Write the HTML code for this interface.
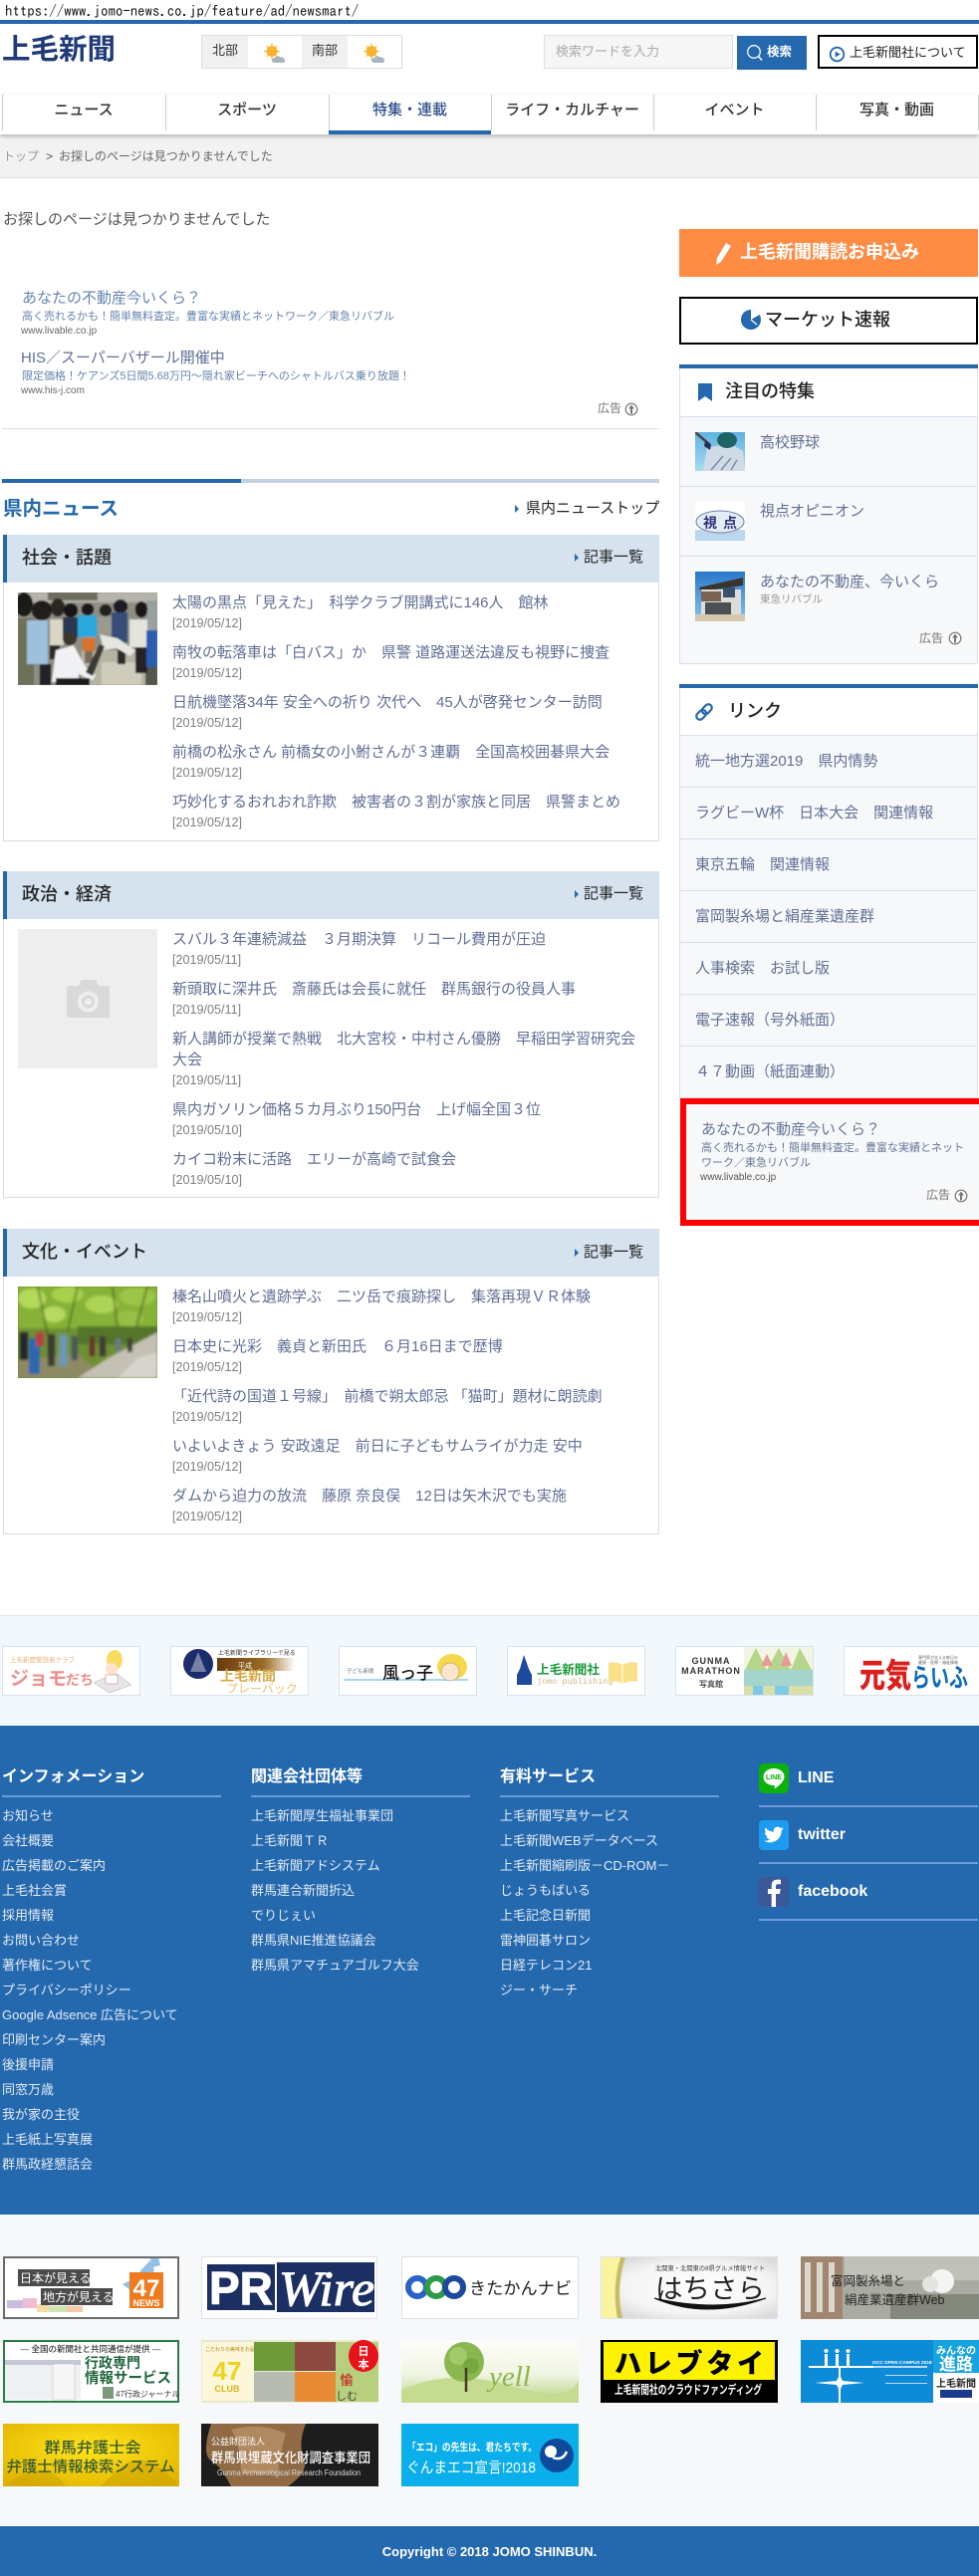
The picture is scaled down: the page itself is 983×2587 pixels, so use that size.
<!DOCTYPE html>
<html lang="ja">
<head>
<meta charset="utf-8">
<title>上毛新聞</title>
<style>
html,body{margin:0;padding:0;background:#fff;}
body{position:relative;width:983px;height:2587px;overflow:hidden;font-family:"Liberation Sans","Noto Sans CJK JP",sans-serif;color:#333;}
.a{position:absolute;}
.t{position:absolute;white-space:nowrap;line-height:20px;}
.h{position:absolute;left:173px;white-space:nowrap;line-height:20px;font-size:15px;color:#626f95;}
.d{position:absolute;left:173px;white-space:nowrap;line-height:20px;font-size:12.6px;color:#808080;}
.sec{position:absolute;left:3px;height:48px;background:#d6e2ee;border-left:4px solid #2468ae;box-sizing:border-box;width:659px;}
.st{position:absolute;left:22px;white-space:nowrap;line-height:24px;font-size:18px;font-weight:500;color:#222;}
.sm{position:absolute;left:586px;white-space:nowrap;line-height:20px;font-size:15px;color:#222;}
.ar{position:absolute;width:0;height:0;border-left:4px solid #2468ae;border-top:4px solid transparent;border-bottom:4px solid transparent;}
.box{position:absolute;left:3px;width:659px;box-sizing:border-box;border:1px solid #ddd;border-top:0;}
.nav{position:absolute;top:95px;height:36px;width:1px;background:#ccc;}
.ni{position:absolute;top:101px;line-height:20px;font-size:15px;font-weight:500;color:#333;text-align:center;white-space:nowrap;}
.lk{position:absolute;left:682px;width:300px;height:52px;box-sizing:border-box;background:#f7f8f9;border:1px solid #dde;border-top:0;line-height:52px;padding-left:15px;font-size:15px;color:#626f95;white-space:nowrap;}
.fh{position:absolute;top:1774px;font-size:16px;font-weight:700;color:#fff;line-height:22px;white-space:nowrap;}
.fl{position:absolute;top:1803px;height:2px;width:220px;background:#6d9bdc;}
.f{position:absolute;font-size:13px;line-height:20px;color:#e4ecf6;white-space:nowrap;}
.sl{position:absolute;left:762px;width:220px;height:2px;background:#6d9bdc;}
.sn{position:absolute;left:801px;font-size:16px;font-weight:700;color:#fff;line-height:20px;white-space:nowrap;}
.b{position:absolute;display:block;}
svg text{font-family:"Liberation Sans","Noto Sans CJK JP",sans-serif;}
</style>
</head>
<body>
<div class="t" style="left:5px;top:1px;font-family:'IPAGothic','Liberation Mono',monospace;font-size:14.800px;color:#111;">https://www.jomo-news.co.jp/feature/ad/newsmart/</div>
<div class="a" style="left:0;top:20px;width:983px;height:4px;background:#2468ae;"></div>

<!-- logo -->
<div class="t" style="left:2px;top:32px;font-size:28.5px;line-height:36px;font-weight:700;color:#1f3a78;">上毛新聞</div>

<!-- weather -->
<div class="a" style="left:202px;top:35px;width:202px;height:34px;box-sizing:border-box;border:1px solid #ddd;background:#fff;"></div>
<div class="a" style="left:203px;top:36px;width:46px;height:32px;background:#f0f0f0;"></div>
<div class="a" style="left:303px;top:36px;width:46px;height:32px;background:#f0f0f0;"></div>
<div class="t" style="left:213px;top:41px;font-size:13px;color:#333;">北部</div>
<div class="t" style="left:313px;top:41px;font-size:13px;color:#333;">南部</div>
<svg class="b" style="left:264px;top:42px;" width="24" height="22" viewBox="0 0 24 22"><g stroke="#f6c04a" stroke-width="1.2"><path d="M9 1v3M9 15v3M1 9.500h3M14 9.500h3M3.500 4l2 2M12.500 13l2 2M14.500 4l-2 2M3.500 15l2-2"/></g><circle cx="9" cy="9.500" r="5.500" fill="#f8b32e"/><path d="M12 21c-2 0-3-1-3-2.500S10.500 16 12 16c.8-1.800 4-2.200 5.500-.5 2-.5 4 .5 4.500 3 .5 1.500-.5 2.500-2 2.500z" fill="#a9b5bf"/></svg>
<svg class="b" style="left:364px;top:42px;" width="24" height="22" viewBox="0 0 24 22"><g stroke="#f6c04a" stroke-width="1.2"><path d="M9 1v3M9 15v3M1 9.500h3M14 9.500h3M3.500 4l2 2M12.500 13l2 2M14.500 4l-2 2M3.500 15l2-2"/></g><circle cx="9" cy="9.500" r="5.500" fill="#f8b32e"/><path d="M12 21c-2 0-3-1-3-2.500S10.500 16 12 16c.8-1.800 4-2.200 5.500-.5 2-.5 4 .5 4.500 3 .5 1.500-.5 2.500-2 2.500z" fill="#a9b5bf"/></svg>

<!-- search -->
<div class="a" style="left:546px;top:35px;width:190px;height:34px;box-sizing:border-box;border:1px solid #ddd;background:#f6f6f6;"></div>
<div class="t" style="left:558px;top:42px;font-size:13px;color:#aaa;">検索ワードを入力</div>
<div class="a" style="left:740px;top:36px;width:70px;height:34px;background:#2468ae;"></div>
<svg class="b" style="left:749px;top:44px;" width="18" height="18" viewBox="0 0 18 18"><circle cx="8" cy="8" r="6.300" fill="none" stroke="#fff" stroke-width="1.300"/><path d="M12.500 12.500l3.500 4" stroke="#fff" stroke-width="1.500"/></svg>
<div class="t" style="left:770px;top:42px;font-size:12.5px;font-weight:700;color:#fff;">検索</div>
<div class="a" style="left:821px;top:35px;width:161px;height:34px;box-sizing:border-box;border:2px solid #000;background:#fff;"></div>
<svg class="b" style="left:832px;top:46px;" width="17" height="17" viewBox="0 0 17 17"><circle cx="8.500" cy="8.500" r="6.800" fill="none" stroke="#2468ae" stroke-width="1.800"/><path d="M6.700 5.500l5 3-5 3z" fill="#2468ae"/></svg>
<div class="t" style="left:853px;top:43px;font-size:13px;color:#222;">上毛新聞社について</div>

<!-- nav -->
<div class="a" style="left:0;top:95px;width:983px;height:40px;background:#fff;box-shadow:0 2px 4px rgba(0,0,0,.25);z-index:1;"></div>
<div style="position:absolute;left:0;top:0;z-index:2;">
<div class="nav" style="left:2px;"></div><div class="nav" style="left:166px;"></div><div class="nav" style="left:330px;"></div><div class="nav" style="left:493px;"></div><div class="nav" style="left:656px;"></div><div class="nav" style="left:819px;"></div><div class="nav" style="left:982px;"></div>
<div class="ni" style="left:2px;width:164px;">ニュース</div>
<div class="ni" style="left:166px;width:164px;">スポーツ</div>
<div class="ni" style="left:330px;width:163px;color:#2f4f8c;">特集・連載</div>
<div class="ni" style="left:493px;width:163px;">ライフ・カルチャー</div>
<div class="ni" style="left:656px;width:163px;">イベント</div>
<div class="ni" style="left:819px;width:163px;">写真・動画</div>
<div class="a" style="left:330px;top:131px;width:163px;height:4px;background:#2468ae;"></div>
</div>

<!-- breadcrumb -->
<div class="a" style="left:0;top:135px;width:983px;height:44px;box-sizing:border-box;background:#f2f2f2;border-bottom:1px solid #ddd;"></div>
<div class="t" style="left:3px;top:147px;font-size:12px;color:#999;">トップ</div>
<div class="t" style="left:46px;top:147px;font-size:12px;color:#555;">&gt;</div>
<div class="t" style="left:59px;top:147px;font-size:12px;color:#666;">お探しのページは見つかりませんでした</div>

<div class="t" style="left:3px;top:211px;font-size:15px;color:#555;">お探しのページは見つかりませんでした</div>

<!-- left ad -->
<div class="t" style="left:22px;top:290px;font-size:15px;color:#6684af;">あなたの不動産今いくら？</div>
<div class="t" style="left:22px;top:308px;font-size:11px;color:#6684af;">高く売れるかも！簡単無料査定。豊富な実績とネットワーク／東急リバブル</div>
<div class="t" style="left:21px;top:323px;font-size:10px;color:#666;">www.livable.co.jp</div>
<div class="t" style="left:21px;top:350px;font-size:15px;color:#5f7099;">HIS／スーパーバザール開催中</div>
<div class="t" style="left:22px;top:368px;font-size:11px;color:#6684af;">限定価格！ケアンズ5日間5.68万円～隠れ家ビーチへのシャトルバス乗り放題！</div>
<div class="t" style="left:21px;top:383px;font-size:10px;color:#666;">www.his-j.com</div>
<div class="t" style="left:600px;top:400px;font-size:12px;color:#777;">広告</div>
<svg class="b" style="left:627px;top:404px;" width="14" height="14" viewBox="0 0 14 14"><circle cx="7" cy="7" r="5.800" fill="#fff" stroke="#777" stroke-width="1.200"/><path d="M7 2.500l3 4H8v5H6v-5H4z" fill="#777"/></svg>
<div class="a" style="left:2px;top:430px;width:660px;height:1px;background:#ddd;"></div>

<!-- 県内ニュース -->
<div class="a" style="left:2px;top:481px;width:660px;height:4px;background:#c4d2df;"></div>
<div class="a" style="left:2px;top:481px;width:240px;height:4px;background:#2468ae;"></div>
<div class="t" style="left:3px;top:498px;font-size:19.500px;line-height:26px;font-weight:700;color:#2468ae;">県内ニュース</div>
<div class="ar" style="left:517px;top:507px;"></div>
<div class="t" style="left:528px;top:501px;font-size:15px;color:#222;">県内ニューストップ</div>

<!-- section 1 -->
<div class="sec" style="top:537px;"></div>
<div class="st" style="top:548px;">社会・話題</div>
<div class="ar" style="left:577px;top:556px;"></div>
<div class="sm" style="top:550px;">記事一覧</div>
<div class="box" style="top:585px;height:260px;"></div>
<svg class="b" style="left:18px;top:595px;" width="140" height="93" viewBox="0 0 140 93"><defs><filter id="bl"><feGaussianBlur stdDeviation=".8"/></filter></defs><rect width="140" height="93" fill="#8f8e84"/><g filter="url(#bl)"><rect width="140" height="10" fill="#b5b4aa"/><rect x="30" y="0" width="50" height="8" fill="#6e6c60"/><rect x="64" y="58" width="76" height="35" fill="#b6b3a2"/><rect x="84" y="70" width="40" height="23" fill="#cfccbb"/><rect x="128" y="70" width="12" height="23" fill="#55544c"/>
<ellipse cx="6" cy="12" rx="9" ry="12" fill="#1d1a18"/><rect x="0" y="26" width="16" height="67" fill="#6e6f58"/>
<ellipse cx="24" cy="18" rx="10" ry="10" fill="#201c1a"/><rect x="9" y="28" width="21" height="44" fill="#9dc0dc"/><rect x="22" y="72" width="11" height="21" fill="#222226"/>
<ellipse cx="40" cy="15" rx="7" ry="9" fill="#2c2622"/><rect x="32" y="27" width="14" height="26" fill="#dbd5c6"/><rect x="32" y="53" width="10" height="14" fill="#2e2a28"/>
<ellipse cx="53" cy="18" rx="7" ry="7" fill="#181616"/><rect x="45" y="25" width="15" height="20" fill="#2b3952"/>
<ellipse cx="70" cy="17" rx="6" ry="6" fill="#1b1816"/><rect x="60" y="23" width="19" height="22" fill="#2ba9de"/><rect x="65" y="45" width="12" height="14" fill="#d9722a"/><rect x="67" y="59" width="8" height="12" fill="#7a6c5a"/>
<ellipse cx="88" cy="18" rx="6" ry="6" fill="#23211e"/><rect x="80" y="24" width="14" height="18" fill="#9a9a90"/>
<ellipse cx="103" cy="14" rx="7" ry="7" fill="#1b1b20"/><rect x="94" y="20" width="16" height="30" fill="#344e78"/><rect x="100" y="50" width="8" height="22" fill="#2c2a26"/>
<ellipse cx="124" cy="17" rx="6" ry="8" fill="#1a1816"/><rect x="112" y="27" width="22" height="28" fill="#e4e4de"/><rect x="118" y="55" width="12" height="26" fill="#262420"/>
<rect x="129" y="38" width="11" height="37" fill="#2a5cb0"/><rect x="130" y="8" width="10" height="30" fill="#9aa0a0"/>
<ellipse cx="52" cy="46" rx="7" ry="7" fill="#3a3632"/><path d="M34 90l4-32 18-5 12 22 10 8-3 5-14-6v8z" fill="#f0f1f4"/><rect x="38" y="86" width="34" height="7" fill="#1e1e1e"/>
<path d="M82 42l4 16 13-2 14 8 5-6-18-12z" fill="#e6e6e0"/><path d="M68 80l14-28 5 2-12 30z" fill="#3a3a34"/></g></svg>
<div class="h" style="top:596px;">太陽の黒点「見えた」　科学クラブ開講式に146人　館林</div>
<div class="d" style="top:616px;">[2019/05/12]</div>
<div class="h" style="top:646px;">南牧の転落車は「白バス」か　県警 道路運送法違反も視野に捜査</div>
<div class="d" style="top:666px;">[2019/05/12]</div>
<div class="h" style="top:696px;">日航機墜落34年 安全への祈り 次代へ　45人が啓発センター訪問</div>
<div class="d" style="top:716px;">[2019/05/12]</div>
<div class="h" style="top:746px;">前橋の松永さん 前橋女の小鮒さんが３連覇　全国高校囲碁県大会</div>
<div class="d" style="top:766px;">[2019/05/12]</div>
<div class="h" style="top:796px;">巧妙化するおれおれ詐欺　被害者の３割が家族と同居　県警まとめ</div>
<div class="d" style="top:816px;">[2019/05/12]</div>

<!-- section 2 -->
<div class="sec" style="top:875px;"></div>
<div class="st" style="top:886px;">政治・経済</div>
<div class="ar" style="left:577px;top:894px;"></div>
<div class="sm" style="top:888px;">記事一覧</div>
<div class="box" style="top:923px;height:280px;"></div>
<div class="a" style="left:18px;top:933px;width:140px;height:140px;background:#eeeeee;"></div>
<svg class="b" style="left:67px;top:984px;" width="43" height="38" viewBox="0 0 43 38"><path d="M3 6h9l2-5q.500-1 2-1h12q1.500 0 2 1l2 5h9q3 0 3 3v26q0 3-3 3H3q-3 0-3-3V9q0-3 3-3z" fill="#d9d9d9"/><circle cx="21.500" cy="22" r="10.500" fill="#eee"/><circle cx="21.500" cy="22" r="6.500" fill="#d9d9d9"/><circle cx="21.500" cy="22" r="3.500" fill="#eee"/></svg>
<div class="h" style="top:934px;">スバル３年連続減益　３月期決算　リコール費用が圧迫</div>
<div class="d" style="top:954px;">[2019/05/11]</div>
<div class="h" style="top:984px;">新頭取に深井氏　斎藤氏は会長に就任　群馬銀行の役員人事</div>
<div class="d" style="top:1004px;">[2019/05/11]</div>
<div class="h" style="top:1034px;">新人講師が授業で熱戦　北大宮校・中村さん優勝　早稲田学習研究会</div>
<div class="h" style="top:1055px;">大会</div>
<div class="d" style="top:1075px;">[2019/05/11]</div>
<div class="h" style="top:1105px;">県内ガソリン価格５カ月ぶり150円台　上げ幅全国３位</div>
<div class="d" style="top:1125px;">[2019/05/10]</div>
<div class="h" style="top:1155px;">カイコ粉末に活路　エリーが高崎で試食会</div>
<div class="d" style="top:1175px;">[2019/05/10]</div>

<!-- section 3 -->
<div class="sec" style="top:1234px;"></div>
<div class="st" style="top:1245px;">文化・イベント</div>
<div class="ar" style="left:577px;top:1254px;"></div>
<div class="sm" style="top:1248px;">記事一覧</div>
<div class="box" style="top:1282px;height:259px;"></div>
<svg class="b" style="left:18px;top:1292px;" width="140" height="92" viewBox="0 0 140 92"><defs><filter id="bl2"><feGaussianBlur stdDeviation="1.200"/></filter></defs><rect width="140" height="92" fill="#6f8f34"/><g filter="url(#bl2)"><rect width="140" height="42" fill="#87b238"/><ellipse cx="14" cy="12" rx="14" ry="10" fill="#b4d85a"/><ellipse cx="50" cy="8" rx="16" ry="8" fill="#a8d04c"/><ellipse cx="36" cy="28" rx="12" ry="8" fill="#b6da60"/><ellipse cx="84" cy="18" rx="16" ry="9" fill="#aed454"/><ellipse cx="120" cy="10" rx="18" ry="9" fill="#9cc646"/><ellipse cx="112" cy="32" rx="14" ry="8" fill="#96bf44"/><path d="M20 0l10 50M60 0L50 44M95 0l6 50M130 0l-12 44" stroke="#4a5a28" stroke-width="1.500" fill="none"/><rect x="60" y="40" width="80" height="18" fill="#55752c"/><path d="M0 74l60-6 30 24H0z" fill="#8d8a62"/><path d="M60 92l30-20 50-26v46z" fill="#c4c1b4"/><path d="M100 92l20-20 20-6v26z" fill="#d6d4cc"/><rect x="2" y="46" width="8" height="28" fill="#25282a"/><rect x="11" y="52" width="11" height="36" fill="#2e66b0"/><rect x="18" y="46" width="8" height="14" fill="#b8403c"/><rect x="30" y="48" width="7" height="32" fill="#3a3a34"/><rect x="41" y="48" width="9" height="32" fill="#6c98b0"/><rect x="54" y="50" width="6" height="24" fill="#47565a"/><rect x="72" y="50" width="5" height="20" fill="#63332e"/><rect x="82" y="50" width="6" height="20" fill="#3c3a30"/><rect x="98" y="52" width="5" height="14" fill="#6c7a88"/><rect x="110" y="52" width="5" height="14" fill="#3a4030"/></g></svg>
<div class="h" style="top:1293px;">榛名山噴火と遺跡学ぶ　二ツ岳で痕跡探し　集落再現ＶＲ体験</div>
<div class="d" style="top:1313px;">[2019/05/12]</div>
<div class="h" style="top:1343px;">日本史に光彩　義貞と新田氏　６月16日まで歴博</div>
<div class="d" style="top:1363px;">[2019/05/12]</div>
<div class="h" style="top:1393px;">「近代詩の国道１号線」　前橋で朔太郎忌 「猫町」題材に朗読劇</div>
<div class="d" style="top:1413px;">[2019/05/12]</div>
<div class="h" style="top:1443px;">いよいよきょう 安政遠足　前日に子どもサムライが力走 安中</div>
<div class="d" style="top:1463px;">[2019/05/12]</div>
<div class="h" style="top:1493px;">ダムから迫力の放流　藤原 奈良俣　12日は矢木沢でも実施</div>
<div class="d" style="top:1513px;">[2019/05/12]</div>

<!-- sidebar -->
<div class="a" style="left:682px;top:230px;width:300px;height:48px;background:#ff8c45;"></div>
<svg class="b" style="left:716px;top:243px;" width="20" height="24" viewBox="0 0 20 24"><path d="M13 1l5 3-10 16-5 3 1-7z" fill="#fff"/></svg>
<div class="t" style="left:743px;top:240px;font-size:18px;line-height:26px;font-weight:700;color:#fff;">上毛新聞購読お申込み</div>
<div class="a" style="left:682px;top:298px;width:300px;height:48px;box-sizing:border-box;border:2.500px solid #000;background:#fff;"></div>
<svg class="b" style="left:743px;top:311px;" width="22" height="20" viewBox="0 0 22 20"><circle cx="11" cy="10" r="10" fill="#2468ae"/><path d="M11 10V0a10 10 0 0 1 8.700 5z" fill="#fff"/><path d="M11 10l6 5" stroke="#fff" stroke-width="1.300"/></svg>
<div class="t" style="left:768px;top:308px;font-size:18px;line-height:26px;font-weight:500;color:#222;">マーケット速報</div>

<div class="a" style="left:682px;top:366px;width:300px;height:4px;background:#2468ae;"></div>
<div class="a" style="left:682px;top:370px;width:300px;height:48px;box-sizing:border-box;border-left:1px solid #dde;border-right:1px solid #dde;"></div>
<svg class="b" style="left:701px;top:385px;" width="14" height="18" viewBox="0 0 14 18"><path d="M0 0h14v18l-7-5-7 5z" fill="#2468ae"/></svg>
<div class="t" style="left:728px;top:381px;font-size:18px;line-height:24px;font-weight:500;color:#222;">注目の特集</div>
<div class="a" style="left:682px;top:418px;width:300px;height:249px;box-sizing:border-box;background:#f7f8f9;border:1px solid #dde;"></div>
<div class="a" style="left:683px;top:488px;width:298px;height:1px;background:#dde;"></div>
<div class="a" style="left:683px;top:558px;width:298px;height:1px;background:#dde;"></div>
<svg class="b" style="left:698px;top:434px;" width="50" height="39" viewBox="0 0 50 39"><defs><linearGradient id="sk" x1="0" y1="0" x2="0" y2="1"><stop offset="0" stop-color="#5fb2e0"/><stop offset="1" stop-color="#a9daf0"/></linearGradient></defs><rect width="50" height="39" fill="url(#sk)"/><path d="M12 16l22-5 14 8 2 20H8z" fill="#cfdce8"/><ellipse cx="32" cy="8" rx="10" ry="8" fill="#1f6464"/><path d="M0 0l14 12" stroke="#4a3f3a" stroke-width="2.500" fill="none"/><path d="M10 9l6 3-1 6-6-4z" fill="#2a3050"/><path d="M16 38l12-14M26 38l10-12M36 38l6-10" stroke="#7d8ea0" stroke-width="1.500"/></svg>
<svg class="b" style="left:698px;top:504px;" width="50" height="39" viewBox="0 0 50 39"><rect width="50" height="39" fill="#fff"/><rect y="28" width="50" height="11" fill="#bcd6ec"/><ellipse cx="25" cy="20" rx="24" ry="11" fill="#e4ecf6" stroke="#6e82a8" stroke-width="1"/><text x="8" y="26" font-size="14" font-weight="700" fill="#2e2f7a">視</text><text x="28" y="26" font-size="14" font-weight="700" fill="#2e2f7a">点</text></svg>
<svg class="b" style="left:698px;top:574px;" width="50" height="50" viewBox="0 0 50 50"><defs><linearGradient id="sk2" x1="0" y1="0" x2="0" y2="1"><stop offset="0" stop-color="#2878c8"/><stop offset="1" stop-color="#8cc4ec"/></linearGradient></defs><rect width="50" height="50" fill="url(#sk2)"/><path d="M4 16L48 6v8L6 20z" fill="#38342f"/><rect x="6" y="18" width="40" height="26" fill="#dcdcd8"/><rect x="6" y="20" width="20" height="10" fill="#7a6355"/><rect x="28" y="16" width="12" height="10" fill="#38506a"/><rect x="10" y="31" width="26" height="12" fill="#4a5056"/><rect y="43" width="50" height="7" fill="#d4c8ae"/></svg>
<div class="t" style="left:763px;top:435px;font-size:15px;color:#626f95;">高校野球</div>
<div class="t" style="left:763px;top:504px;font-size:15px;color:#626f95;">視点オピニオン</div>
<div class="t" style="left:763px;top:575px;font-size:15px;color:#626f95;">あなたの不動産、今いくら</div>
<div class="t" style="left:763px;top:592px;font-size:10.500px;color:#999;">東急リバブル</div>
<div class="t" style="left:923px;top:631px;font-size:12px;color:#777;">広告</div>
<svg class="b" style="left:952px;top:634px;" width="14" height="14" viewBox="0 0 14 14"><circle cx="7" cy="7" r="5.800" fill="#fff" stroke="#777" stroke-width="1.200"/><path d="M7 2.500l3 4H8v5H6v-5H4z" fill="#777"/></svg>

<div class="a" style="left:682px;top:687px;width:300px;height:4px;background:#2468ae;"></div>
<div class="a" style="left:682px;top:691px;width:300px;height:48px;box-sizing:border-box;border-left:1px solid #dde;border-right:1px solid #dde;border-bottom:1px solid #dde;"></div>
<svg class="b" style="left:697px;top:705px;" width="20" height="20" viewBox="0 0 20 20"><g fill="none" stroke="#2468ae" stroke-width="2.200" transform="rotate(-45 10 10)"><rect x="0.500" y="6.500" width="11" height="7" rx="3.500"/><rect x="8.500" y="6.500" width="11" height="7" rx="3.500"/></g></svg>
<div class="t" style="left:731px;top:702px;font-size:18px;line-height:24px;font-weight:500;color:#222;">リンク</div>
<div class="lk" style="top:739px;">統一地方選2019　県内情勢</div>
<div class="lk" style="top:791px;">ラグビーW杯　日本大会　関連情報</div>
<div class="lk" style="top:843px;">東京五輪　関連情報</div>
<div class="lk" style="top:895px;">富岡製糸場と絹産業遺産群</div>
<div class="lk" style="top:947px;">人事検索　お試し版</div>
<div class="lk" style="top:999px;">電子速報（号外紙面）</div>
<div class="lk" style="top:1051px;">４７動画（紙面連動）</div>

<div class="a" style="left:683px;top:1103px;width:306px;height:128px;box-sizing:border-box;border:6px solid #f00;background:#f7f8f9;"></div>
<div class="t" style="left:704px;top:1125px;font-size:15px;color:#66769a;">あなたの不動産今いくら？</div>
<div class="t" style="left:704px;top:1143px;font-size:11px;color:#66769a;">高く売れるかも！簡単無料査定。豊富な実績とネット</div>
<div class="t" style="left:704px;top:1158px;font-size:11px;color:#66769a;">ワーク／東急リバブル</div>
<div class="t" style="left:703px;top:1173px;font-size:10px;color:#555;">www.livable.co.jp</div>
<div class="t" style="left:930px;top:1190px;font-size:12px;color:#777;">広告</div>
<svg class="b" style="left:958px;top:1194px;" width="14" height="14" viewBox="0 0 14 14"><circle cx="7" cy="7" r="5.800" fill="#fff" stroke="#777" stroke-width="1.200"/><path d="M7 2.500l3 4H8v5H6v-5H4z" fill="#777"/></svg>

<!-- banner strip -->
<div class="a" style="left:0;top:1622px;width:983px;height:111px;box-sizing:border-box;background:#f2f8fc;border-top:1px solid #dbe5ee;"></div>

<svg class="b" style="left:2px;top:1653px;" width="139" height="50" viewBox="0 0 139 50"><rect x=".5" y=".5" width="138" height="49" fill="#fff" stroke="#d8e2ec"/><text x="8" y="16" font-size="6.500" fill="#e9b07a">上毛新聞愛読者クラブ</text><text x="8" y="39" font-size="19" font-weight="700" fill="#ef8e8e">ジョモ</text><text x="64" y="39" font-size="14" font-weight="700" fill="#ef8e8e">だち</text><path d="M92 37l22-10 16 12-22 8z" fill="#e4e6ea" stroke="#aaa" stroke-width=".5"/><ellipse cx="113" cy="14" rx="8" ry="10" fill="#f7dc60"/><circle cx="110" cy="23" r="6" fill="#fbe3cf"/><rect x="104" y="29" width="12" height="9" fill="#fff" stroke="#e08a8a" stroke-width=".6"/></svg>

<svg class="b" style="left:171px;top:1653px;" width="139" height="50" viewBox="0 0 139 50"><defs><linearGradient id="br" x1="0" x2="1"><stop offset="0" stop-color="#6a3c0c"/><stop offset=".6" stop-color="#9a6a26"/><stop offset="1" stop-color="#fff"/></linearGradient></defs><rect x=".5" y=".5" width="138" height="49" fill="#fff" stroke="#d8e2ec"/><circle cx="28" cy="18" r="15" fill="#1b2d6a"/><path d="M28 6l-8 20h16z" fill="#fff" opacity=".4"/><text x="48" y="9" font-size="6" fill="#333">上毛新聞ライブラリーで見る</text><rect x="47" y="12" width="78" height="13" fill="url(#br)"/><text x="68" y="22" font-size="7" fill="#fff">平成</text><text x="50" y="35" font-size="14" font-weight="700" fill="#d7a845">上毛新聞</text><text x="56" y="47" font-size="12" fill="#e8c56a">プレーバック</text></svg>

<svg class="b" style="left:340px;top:1653px;" width="139" height="50" viewBox="0 0 139 50"><rect x=".5" y=".5" width="138" height="49" fill="#fff" stroke="#d8e2ec"/><text x="8" y="27" font-size="5.500" fill="#6a7a8a">子ども新聞</text><rect x="5" y="33" width="125" height="2" fill="#a8d8f0"/><text x="44" y="33" font-size="17" font-weight="500" fill="#111">風っ子</text><ellipse cx="114" cy="21" rx="15" ry="13" fill="#f6d84a"/><circle cx="112" cy="26" r="9" fill="#fbe6cc" stroke="#888" stroke-width=".5"/></svg>

<svg class="b" style="left:509px;top:1653px;" width="139" height="50" viewBox="0 0 139 50"><rect x=".5" y=".5" width="138" height="49" fill="#fff" stroke="#d8e2ec"/><path d="M17 9l5 14 3 6v10H10V29l3-6z" fill="#1c4a9c"/><text x="30" y="28" font-size="12.600" font-weight="700" fill="#1a9a3a">上毛新聞社</text><text x="30" y="38" font-size="8.500" fill="#c8b98a" style="font-family:'Liberation Mono',monospace">jomo publishing</text><path d="M102 17q7-2 14 2 7-4 15-2v19q-8-2-15 2-7-4-14-2z" fill="#fbe08a"/><path d="M116 19v19" stroke="#fff" stroke-width="1"/></svg>

<svg class="b" style="left:678px;top:1653px;" width="139" height="50" viewBox="0 0 139 50"><rect x=".5" y=".5" width="138" height="49" fill="#fff" stroke="#d8e2ec"/><text x="36" y="18" font-size="9" font-weight="700" fill="#333" text-anchor="middle" letter-spacing="1">GUNMA</text><text x="36" y="28" font-size="9" font-weight="700" fill="#333" text-anchor="middle" letter-spacing="1">MARATHON</text><text x="36" y="41" font-size="8" font-weight="500" fill="#333" text-anchor="middle">写真館</text><rect x="69" y="1" width="69" height="48" fill="#f3f5e4"/><path d="M70 24l11-22 11 22zM92 24l12-22 12 22zM116 24l9-22 12 22z" fill="#b5d58a"/><path d="M86 20l6-12 6 12zM106 20l5-14 6 14z" fill="#e89a9a"/><rect x="69" y="24" width="69" height="16" fill="#a4d4cc"/><rect x="69" y="40" width="69" height="9" fill="#d8e0a8"/><rect x="78" y="40" width="10" height="9" fill="#7ec8e8"/><rect x="100" y="40" width="14" height="9" fill="#7ec8e8"/></svg>

<svg class="b" style="left:847px;top:1653px;" width="136" height="50" viewBox="0 0 136 50"><rect x=".5" y=".5" width="140" height="49" fill="#fff" stroke="#d8e2ec"/><text x="16" y="41" font-size="33" font-weight="900" fill="#d9201f" textLength="52" lengthAdjust="spacingAndGlyphs">元気</text><text x="68" y="41" font-size="26" font-weight="700" fill="#0e6bb8" textLength="57" lengthAdjust="spacingAndGlyphs">らいふ</text><text x="75" y="13" font-size="4" fill="#666">専門家が支える毎日の</text><text x="75" y="18" font-size="4" fill="#666">健康・医療・福祉情報</text></svg>

<!-- footer -->
<div class="a" style="left:0;top:1733px;width:983px;height:491px;background:#2468ae;"></div>
<div class="fh" style="left:2px;">インフォメーション</div>
<div class="fh" style="left:252px;">関連会社団体等</div>
<div class="fh" style="left:502px;">有料サービス</div>
<div class="fl" style="left:2px;"></div><div class="fl" style="left:252px;"></div><div class="fl" style="left:502px;"></div>

<div class="f" style="left:2px;top:1814px;">お知らせ</div>
<div class="f" style="left:2px;top:1839px;">会社概要</div>
<div class="f" style="left:2px;top:1864px;">広告掲載のご案内</div>
<div class="f" style="left:2px;top:1889px;">上毛社会賞</div>
<div class="f" style="left:2px;top:1914px;">採用情報</div>
<div class="f" style="left:2px;top:1939px;">お問い合わせ</div>
<div class="f" style="left:2px;top:1964px;">著作権について</div>
<div class="f" style="left:2px;top:1989px;">プライバシーポリシー</div>
<div class="f" style="left:2px;top:2014px;">Google Adsence 広告について</div>
<div class="f" style="left:2px;top:2039px;">印刷センター案内</div>
<div class="f" style="left:2px;top:2064px;">後援申請</div>
<div class="f" style="left:2px;top:2089px;">同窓万歳</div>
<div class="f" style="left:2px;top:2114px;">我が家の主役</div>
<div class="f" style="left:2px;top:2139px;">上毛紙上写真展</div>
<div class="f" style="left:2px;top:2164px;">群馬政経懇話会</div>

<div class="f" style="left:252px;top:1814px;">上毛新聞厚生福祉事業団</div>
<div class="f" style="left:252px;top:1839px;">上毛新聞ＴＲ</div>
<div class="f" style="left:252px;top:1864px;">上毛新聞アドシステム</div>
<div class="f" style="left:252px;top:1889px;">群馬連合新聞折込</div>
<div class="f" style="left:252px;top:1914px;">でりじぇい</div>
<div class="f" style="left:252px;top:1939px;">群馬県NIE推進協議会</div>
<div class="f" style="left:252px;top:1964px;">群馬県アマチュアゴルフ大会</div>

<div class="f" style="left:502px;top:1814px;">上毛新聞写真サービス</div>
<div class="f" style="left:502px;top:1839px;">上毛新聞WEBデータベース</div>
<div class="f" style="left:502px;top:1864px;">上毛新聞縮刷版－CD-ROM－</div>
<div class="f" style="left:502px;top:1889px;">じょうもばいる</div>
<div class="f" style="left:502px;top:1914px;">上毛記念日新聞</div>
<div class="f" style="left:502px;top:1939px;">雷神囲碁サロン</div>
<div class="f" style="left:502px;top:1964px;">日経テレコン21</div>
<div class="f" style="left:502px;top:1989px;">ジー・サーチ</div>

<svg class="b" style="left:762px;top:1771px;" width="30" height="30" viewBox="0 0 30 30"><rect width="30" height="30" rx="5" fill="#0ab20a"/><path d="M15 5c6 0 10.500 3.600 10.500 8.500 0 4.500-6 9.500-10 12 .5-2 .5-3.500-.5-3.500C9 22 4.500 18.400 4.500 13.500 4.500 8.600 9 5 15 5z" fill="#fff"/><text x="15" y="16" font-size="7" font-weight="700" fill="#0ab20a" text-anchor="middle">LINE</text></svg>
<div class="sn" style="top:1776px;">LINE</div>
<div class="sl" style="top:1813px;"></div>
<svg class="b" style="left:762px;top:1828px;" width="30" height="30" viewBox="0 0 30 30"><rect width="30" height="30" rx="4" fill="#1d9bf0"/><path d="M25 8.500c-.8.400-1.600.600-2.400.700.900-.5 1.500-1.300 1.800-2.200-.8.500-1.700.8-2.600 1a4 4 0 0 0-6.900 3.700C11.500 11.500 8.500 9.900 6.500 7.400c-1 1.800-.5 4.100 1.200 5.300-.6 0-1.200-.2-1.800-.5 0 2 1.400 3.700 3.300 4.100-.6.200-1.200.2-1.800.1.500 1.600 2 2.800 3.800 2.800A8 8 0 0 1 5 20.500 11.500 11.500 0 0 0 22.700 10.300c.9-.5 1.700-1.100 2.300-1.800z" fill="#fff"/></svg>
<div class="sn" style="top:1833px;">twitter</div>
<div class="sl" style="top:1870px;"></div>
<svg class="b" style="left:762px;top:1885px;" width="30" height="30" viewBox="0 0 30 30"><rect width="30" height="30" rx="4" fill="#3b5998"/><path d="M17 30V17h4l.6-5H17V9.500c0-1.500.5-2.300 2.400-2.300H22V2.800C21.500 2.700 20 2.600 18.500 2.600c-3.500 0-5.800 2.100-5.800 6V12H9v5h3.700v13z" fill="#fff"/></svg>
<div class="sn" style="top:1890px;">facebook</div>
<div class="sl" style="top:1927px;"></div>

<!-- lower banners -->
<div class="a" style="left:0;top:2224px;width:983px;height:313px;background:#f7f8f9;"></div>

<svg class="b" style="left:3px;top:2266px;" width="177" height="63" viewBox="0 0 177 63"><rect x="1" y="1" width="175" height="61" fill="#fff" stroke="#6b6b6b" stroke-width="2"/><g fill="#3f8bd0" opacity=".55"><path d="M120 28l12-6 10-12 6-6 4 10-10 14-14 6z"/><path d="M148 2l8-1 2 8-8 2z"/></g><g opacity=".55"><rect x="4" y="44" width="16" height="8" fill="#9d87c8"/><rect x="20" y="42" width="14" height="10" fill="#e38ab0"/><rect x="34" y="48" width="12" height="8" fill="#f0c060"/><rect x="46" y="50" width="18" height="6" fill="#a6d070"/><rect x="64" y="50" width="16" height="6" fill="#f2a060"/></g><rect x="15" y="13" width="72" height="17" fill="#4b4b4b"/><text x="17" y="26" font-size="12" fill="#fff">日本が見える</text><rect x="38" y="32" width="72" height="17" fill="#4b4b4b"/><text x="40" y="45" font-size="12" fill="#fff">地方が見える</text><rect x="127" y="16" width="34" height="36" fill="#ee7c1e"/><text x="144" y="40" font-size="24" font-weight="700" fill="#fff" text-anchor="middle">47</text><text x="144" y="50" font-size="9" font-weight="700" fill="#fff" text-anchor="middle">NEWS</text></svg>

<svg class="b" style="left:202px;top:2266px;" width="177" height="63" viewBox="0 0 177 63"><rect x=".5" y=".5" width="176" height="62" fill="#fff" stroke="#dde2ea"/><rect x="4" y="6" width="170" height="50" fill="#1c2f63"/><text x="8" y="48" font-size="46" font-weight="700" fill="#fff" stroke="#fff" stroke-width="1">PR</text><rect x="5" y="7" width="70" height="48" fill="none" stroke="#fff" stroke-width="2"/><text x="78" y="49" font-size="50" font-style="italic" fill="#fff" stroke="#fff" stroke-width="1" style="font-family:'Liberation Serif',serif" textLength="96" lengthAdjust="spacingAndGlyphs">Wire</text></svg>

<svg class="b" style="left:403px;top:2266px;" width="178" height="63" viewBox="0 0 178 63"><rect x=".5" y=".5" width="177" height="62" fill="#fff" stroke="#dde2ea"/><circle cx="16" cy="31" r="9" fill="none" stroke="#2a63c8" stroke-width="6"/><circle cx="35" cy="31" r="9" fill="none" stroke="#2f9a4a" stroke-width="6"/><circle cx="53" cy="31" r="9" fill="none" stroke="#1b4a9c" stroke-width="6"/><text x="68" y="38" font-size="17" fill="#222" textLength="103" lengthAdjust="spacingAndGlyphs">きたかんナビ</text></svg>

<svg class="b" style="left:603px;top:2266px;" width="178" height="63" viewBox="0 0 178 63"><defs><radialGradient id="pl" cx=".55" cy=".5" r=".6"><stop offset="0" stop-color="#fff"/><stop offset=".7" stop-color="#f4f4f4"/><stop offset="1" stop-color="#dcdcdc"/></radialGradient></defs><rect x=".5" y=".5" width="177" height="62" fill="url(#pl)" stroke="#dde2ea"/><path d="M1 1h22q-10 30-4 61H1z" fill="#faf3a0"/><path d="M20 1h5q-10 30-3 61h-5q-6-30 3-61z" fill="#c5bd68"/><text x="55" y="14" font-size="6.500" fill="#444" textLength="110" lengthAdjust="spacingAndGlyphs">北関東・北関東の8県グルメ情報サイト</text><text x="55" y="42" font-size="27" fill="#222" textLength="110" lengthAdjust="spacingAndGlyphs">はちさら</text><path d="M54 42q52 22 112 0q-50 14-112 0z" fill="#111" stroke="#111"/></svg>

<svg class="b" style="left:804px;top:2266px;" width="179" height="63" viewBox="0 0 179 63"><rect width="179" height="63" fill="#a9aaa2"/><rect width="42" height="63" fill="#a08670"/><g fill="#dcd6cc"><rect x="4" y="6" width="6" height="50"/><rect x="16" y="6" width="6" height="50"/><rect x="28" y="6" width="6" height="50"/></g><rect x="44" y="0" width="135" height="24" fill="#c0c1b9"/><rect x="90" y="38" width="89" height="25" fill="#84877c"/><circle cx="142" cy="25" r="12" fill="#f4f4f2"/><circle cx="130" cy="28" r="8" fill="#e4e4e0"/><text x="30" y="29" font-size="12.500" fill="#222">富岡製糸場と</text><text x="44" y="48" font-size="12.500" fill="#222">絹産業遺産群Web</text></svg>

<svg class="b" style="left:3px;top:2350px;" width="177" height="63" viewBox="0 0 177 63"><rect x="1" y="1" width="175" height="61" fill="#fff" stroke="#2f7a4a" stroke-width="2"/><text x="88" y="12" font-size="8.500" font-weight="500" fill="#333" text-anchor="middle">― 全国の新聞社と共同通信が提供 ―</text><rect x="2" y="20" width="76" height="40" fill="#eef0f3"/><rect x="2" y="20" width="76" height="5" fill="#c3c8d4"/><rect x="50" y="24" width="22" height="36" fill="#f7f7f7" stroke="#bbb" stroke-width=".5"/><text x="82" y="28" font-size="14" font-weight="700" fill="#20673c">行政専門</text><text x="82" y="43" font-size="14.500" font-weight="700" fill="#20673c">情報サービス</text><rect x="100" y="47" width="11" height="12" fill="#7a9a7a"/><text x="113" y="57" font-size="8" fill="#333">47行政ジャーナル</text></svg>

<svg class="b" style="left:202px;top:2350px;" width="178" height="63" viewBox="0 0 178 63"><rect width="178" height="63" fill="#e8ead0"/><rect x="1" y="2" width="52" height="59" fill="#fbf7d8"/><text x="4" y="11" font-size="5" fill="#b98a1e">こだわりの美味をお届け！</text><text x="26" y="40" font-size="26" font-weight="700" fill="#f3d21c" text-anchor="middle">47</text><text x="26" y="52" font-size="9" font-weight="700" fill="#d8b71c" text-anchor="middle">CLUB</text><rect x="53" y="2" width="41" height="29" fill="#6f9a3a"/><rect x="94" y="2" width="41" height="29" fill="#8c4a40"/><rect x="53" y="32" width="41" height="30" fill="#b6bcb4"/><rect x="94" y="32" width="41" height="30" fill="#e78b34"/><rect x="135" y="2" width="43" height="60" fill="#b8cf7e"/><ellipse cx="163" cy="16" rx="15" ry="16" fill="#e8121a"/><text x="163" y="15" font-size="11" font-weight="700" fill="#fff" text-anchor="middle">日</text><text x="163" y="28" font-size="11" font-weight="700" fill="#fff" text-anchor="middle">本</text><text x="146" y="45" font-size="13" font-weight="700" fill="#c0392b" text-anchor="middle">愉</text><text x="146" y="60" font-size="11" fill="#444" text-anchor="middle">しむ</text></svg>

<svg class="b" style="left:403px;top:2350px;" width="178" height="63" viewBox="0 0 178 63"><defs><linearGradient id="yl" x1="0" y1="0" x2="0" y2="1"><stop offset="0" stop-color="#fdfdfa"/><stop offset=".55" stop-color="#f0f5e2"/><stop offset="1" stop-color="#b6d282"/></linearGradient></defs><rect width="178" height="63" fill="url(#yl)"/><path d="M0 50q50-22 110-4t68-6v23H0z" fill="#c4db90"/><circle cx="63" cy="22" r="20" fill="#8ab84e"/><circle cx="57" cy="16" r="9" fill="#a2c96a"/><circle cx="70" cy="26" r="8" fill="#76a83e"/><path d="M65 52V28" stroke="#4a3a24" stroke-width="2.500"/><text x="88" y="46" font-size="29" font-style="italic" fill="#8eb54c" style="font-family:'Liberation Serif',serif">yell</text></svg>

<svg class="b" style="left:603px;top:2350px;" width="178" height="63" viewBox="0 0 178 63"><rect width="178" height="63" fill="#000"/><rect x="3" y="2" width="172" height="38" fill="#fff200"/><text x="89" y="33" font-size="27" font-weight="900" fill="#000" text-anchor="middle" textLength="150" lengthAdjust="spacing">ハレブタイ</text><text x="88" y="54" font-size="12" font-weight="700" fill="#fff" text-anchor="middle" textLength="148" lengthAdjust="spacingAndGlyphs">上毛新聞社のクラウドファンディング</text></svg>

<svg class="b" style="left:804px;top:2350px;" width="179" height="63" viewBox="0 0 179 63"><rect width="179" height="63" fill="#0d8bd6"/><rect x="133" y="0" width="46" height="33" fill="#17a3e0"/><rect x="133" y="33" width="46" height="30" fill="#fff"/><text x="156" y="14" font-size="10" font-weight="700" fill="#fff" text-anchor="middle">みんなの</text><text x="156" y="30" font-size="17" font-weight="700" fill="#fff" text-anchor="middle">進路</text><text x="156" y="47" font-size="10" font-weight="700" fill="#222" text-anchor="middle">上毛新聞</text><rect x="140" y="50" width="32" height="8" fill="#1b3c8c"/><g fill="#fff"><rect x="38" y="27" width="2" height="36"/><path d="M39 35l3 6 22 2-22 2-3 6-3-6-22-2 22-2z"/><rect x="8" y="26" width="65" height="2"/><rect x="73" y="26" width="54" height="2" opacity=".7"/><rect x="24" y="14" width="3" height="12"/><rect x="35" y="14" width="3" height="12"/><rect x="46" y="14" width="3" height="12"/><circle cx="25.500" cy="11" r="2"/><circle cx="36.500" cy="11" r="2"/><circle cx="47.500" cy="11" r="2"/></g><text x="72" y="24" font-size="4.800" font-weight="700" fill="#fff">OCC OPEN CAMPUS 2018</text><rect x="85" y="35" width="42" height="1" fill="#bde" /><rect x="85" y="43" width="42" height="1" fill="#bde"/></svg>

<svg class="b" style="left:3px;top:2434px;" width="177" height="63" viewBox="0 0 177 63"><defs><radialGradient id="ye" cx=".5" cy=".4" r=".7"><stop offset="0" stop-color="#ffe41a"/><stop offset="1" stop-color="#e2b400"/></radialGradient></defs><rect width="177" height="63" fill="url(#ye)"/><path d="M0 63q40-30 60-4t50-8 67 12z" fill="#c9a000" opacity=".5"/><text x="90" y="29" font-size="15" font-weight="500" fill="#345a33" text-anchor="middle" textLength="97" lengthAdjust="spacingAndGlyphs">群馬弁護士会</text><text x="88" y="48" font-size="15" font-weight="500" fill="#345a33" text-anchor="middle" textLength="169" lengthAdjust="spacingAndGlyphs">弁護士情報検索システム</text></svg>

<svg class="b" style="left:202px;top:2434px;" width="178" height="63" viewBox="0 0 178 63"><rect width="178" height="63" fill="#1d1d1d"/><path d="M10 0h95q-8 20-2 34t-16 29H30q-10-20-20-26T10 0z" fill="#8f6a44"/><path d="M30 6q30-8 55 4-6 20-8 40H40q0-28-10-44z" fill="#b08960"/><text x="10" y="21" font-size="9" fill="#fff">公益財団法人</text><text x="10" y="39" font-size="13.500" font-weight="500" fill="#fff" textLength="160" lengthAdjust="spacingAndGlyphs">群馬県埋蔵文化財調査事業団</text><text x="16" y="52" font-size="8" fill="#ddd" textLength="144" lengthAdjust="spacingAndGlyphs">Gunma Archaeological Research Foundation</text></svg>

<svg class="b" style="left:403px;top:2434px;" width="178" height="63" viewBox="0 0 178 63"><rect width="178" height="63" fill="#0aaeea"/><text x="6" y="27" font-size="10.500" font-weight="700" fill="#fff" textLength="130" lengthAdjust="spacingAndGlyphs">「エコ」の先生は、君たちです。</text><text x="5" y="49" font-size="15" font-weight="400" fill="#fff" textLength="130" lengthAdjust="spacingAndGlyphs">ぐんまエコ宣言!2018</text><ellipse cx="156" cy="32" rx="17" ry="17" fill="#0d4a9a"/><circle cx="150" cy="28" r="6" fill="#fff"/><path d="M152 34q10 4 14-6" stroke="#fff" stroke-width="2.500" fill="none"/></svg>

<!-- copyright -->
<div class="a" style="left:0;top:2537px;width:983px;height:50px;background:#2468ae;"></div>
<div class="t" style="left:0;top:2553px;width:983px;text-align:center;font-size:13px;font-weight:700;color:#fff;">Copyright © 2018 JOMO SHINBUN.</div>
</body>
</html>
